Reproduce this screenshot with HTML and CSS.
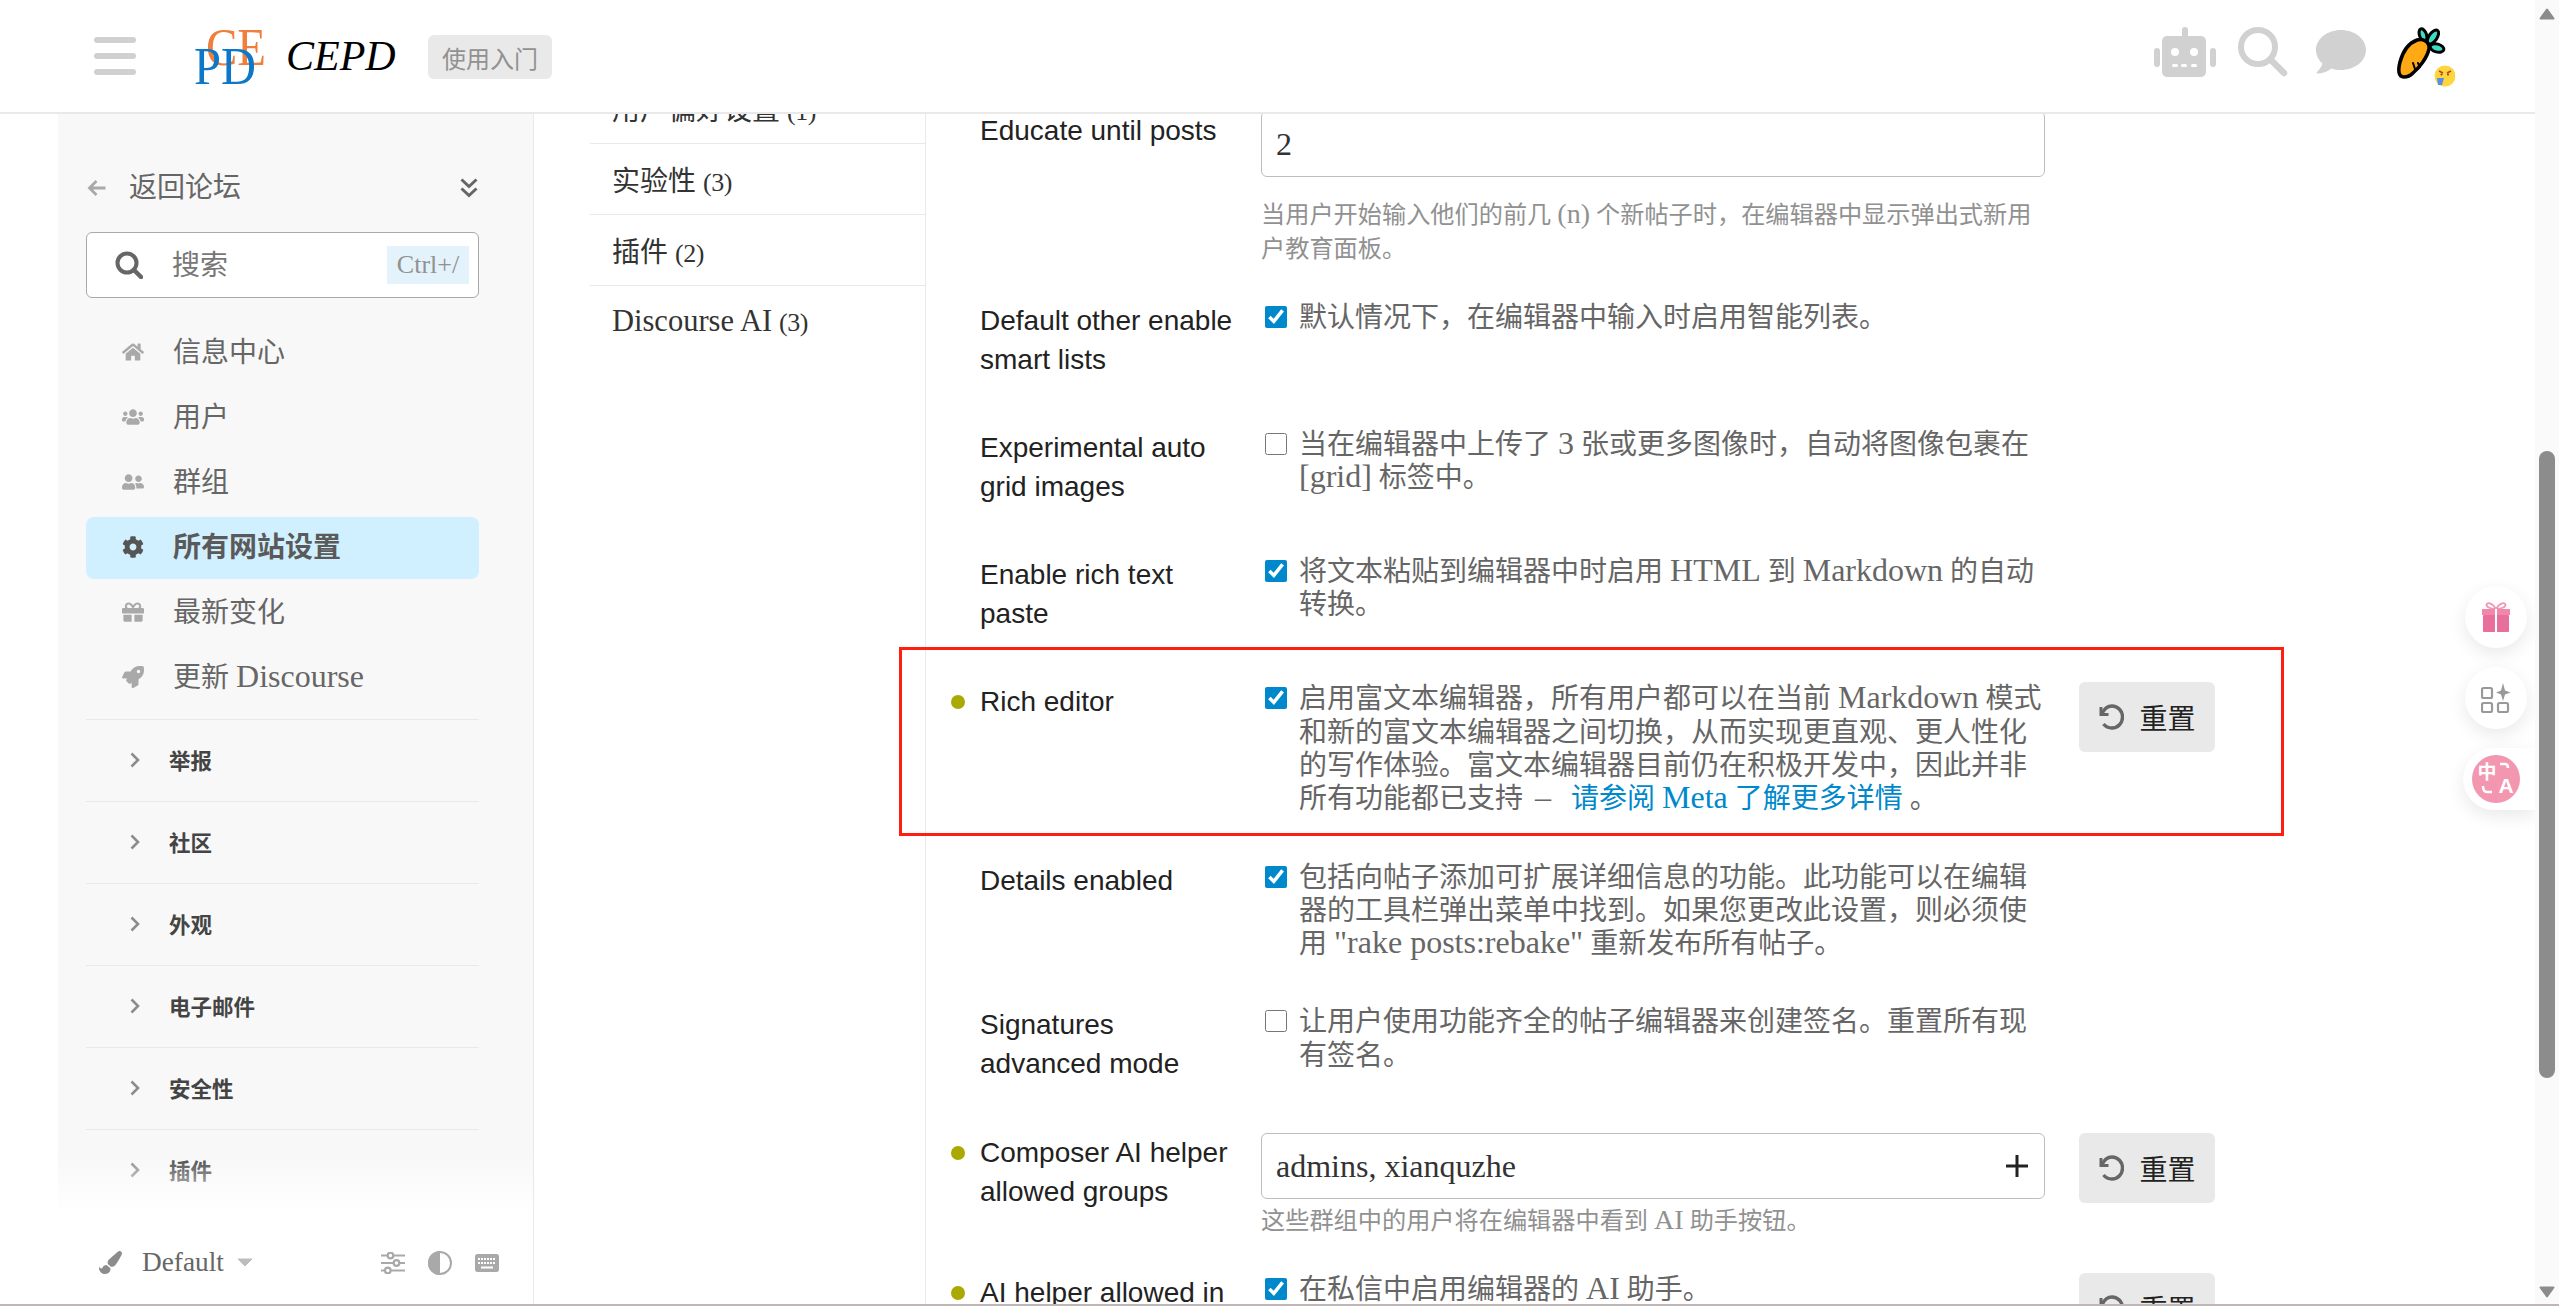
FILE: index.html
```html
<!DOCTYPE html>
<html lang="zh-CN">
<head>
<meta charset="utf-8">
<title>CEPD</title>
<link rel="stylesheet" href="styles.css">
</head>
<body>
<div class="window">
  <div class="app">
    <header class="header">
      <div class="burger"><span></span><span></span><span></span></div>
      <svg class="logo" viewBox="0 0 76 60" width="76" height="60">
        <text x="13" y="38" class="logo-ce" textLength="60" lengthAdjust="spacingAndGlyphs">CE</text>
        <text x="1" y="57" class="logo-pd" textLength="62" lengthAdjust="spacingAndGlyphs">PD</text>
      </svg>
      <span class="brand">CEPD</span>
      <span class="badge">使用入门</span>
      <div class="header-icons">
        <svg class="ic-robot" viewBox="0 0 62 50" width="62" height="50">
          <rect x="28" y="0" width="6" height="12" rx="3" fill="#d1d1d1"/>
          <rect x="8" y="9" width="44" height="41" rx="5" fill="#d1d1d1"/>
          <rect x="0" y="21" width="6" height="19" rx="3" fill="#d1d1d1"/>
          <rect x="56" y="21" width="6" height="19" rx="3" fill="#d1d1d1"/>
          <circle cx="21" cy="25" r="4" fill="#fff"/><circle cx="40" cy="25" r="4" fill="#fff"/>
          <rect x="18" y="37" width="6" height="3" rx="1.5" fill="#fff"/><rect x="27" y="37" width="6" height="3" rx="1.5" fill="#fff"/><rect x="37" y="37" width="6" height="3" rx="1.5" fill="#fff"/>
        </svg>
        <svg class="ic-search" viewBox="0 0 50 50" width="50" height="50">
          <circle cx="20" cy="20" r="17" fill="none" stroke="#d1d1d1" stroke-width="6"/>
          <path d="M33 33L46 46" stroke="#d1d1d1" stroke-width="6.5" stroke-linecap="round"/>
        </svg>
        <svg class="ic-bubble" viewBox="0 0 50 44" width="50" height="44">
          <path d="M25 0C38.800 0 50 8.800 50 20S38.800 40 25 40C21.500 40 18.500 39.500 15.500 38.500C11 42 6 43.500 1.500 43.500C0.500 43.500 0.300 42.700 1 42C3.500 39.500 5.500 36.500 6.500 33.500C2.500 30 0 25.200 0 20C0 8.800 11.200 0 25 0Z" fill="#d1d1d1"/>
        </svg>
        <svg class="ic-avatar" viewBox="0 0 60 62" width="60" height="62">
          <ellipse cx="28" cy="9" rx="3.500" ry="6.500" transform="rotate(-20 28 9)" fill="#3fdcc4" stroke="#000" stroke-width="3"/>
          <ellipse cx="38" cy="11" rx="4" ry="8" transform="rotate(35 38 11)" fill="#3fdcc4" stroke="#000" stroke-width="3"/>
          <ellipse cx="42" cy="22" rx="7" ry="4" transform="rotate(15 42 22)" fill="#3fdcc4" stroke="#000" stroke-width="3"/>
          <path d="M9 51C3 51 3 44 5 36C8 25 14 17 22 14C28 12 35 16 34 23C32 32 24 42 18 47C15 50 12 51 9 51Z" fill="#ffa914" stroke="#000" stroke-width="3.500"/>
          <path d="M18 37L20 43M23 37L25 41" stroke="#000" stroke-width="2" stroke-linecap="round"/>
          <circle cx="50" cy="50" r="10.500" fill="#fcd53f"/>
          <path d="M44 45L48 47M56 45L52 47" stroke="#b5451b" stroke-width="1.500"/>
          <circle cx="46.500" cy="48.500" r="1" fill="#8a3a12"/><circle cx="53" cy="48.500" r="1" fill="#8a3a12"/>
          <path d="M42 52H49L47 59H43Z" fill="#5b8be8"/>
        </svg>
      </div>
    </header>
    <div class="content">
      <aside class="sidebar">
        <div class="side-scroll">
          <div class="side-head">
            <svg class="back-arrow" viewBox="0 0 20 18" width="20" height="18"><path d="M18.500 9H3M9.500 2L2.500 9L9.500 16" fill="none" stroke="#a9a9a9" stroke-width="2.800"/></svg>
            <span class="back-text">返回论坛</span>
            <svg class="double-chev" viewBox="0 0 18 20" width="18" height="20"><path d="M1.500 1.500L9 8.500L16.500 1.500M1.500 10.500L9 17.500L16.500 10.500" fill="none" stroke="#666" stroke-width="3"/></svg>
          </div>
          <div class="side-search">
            <svg viewBox="0 0 28 28" width="28" height="28"><circle cx="12" cy="12" r="9.500" fill="none" stroke="#666" stroke-width="4"/><path d="M19 19L26 26" stroke="#666" stroke-width="4.500" stroke-linecap="round"/></svg>
            <span class="search-word">搜索</span>
            <span class="kbd">Ctrl+/</span>
          </div>
          <nav class="nav">
            <a class="nav-item"><svg class="nav-ic" viewBox="0 0 576 512"><path d="M280.37 148.26L96 300.110V464a16 16 0 0 0 16 16l112.060-.290a16 16 0 0 0 15.920-16V368a16 16 0 0 1 16-16h64a16 16 0 0 1 16 16v95.640a16 16 0 0 0 16 16.050L464 480a16 16 0 0 0 16-16V300L295.670 148.260a12.190 12.190 0 0 0-15.300 0zM571.600 251.470L488 182.560V44.050a12 12 0 0 0-12-12h-56a12 12 0 0 0-12 12v72.610L318.470 43a48 48 0 0 0-61 0L4.340 251.470a12 12 0 0 0-1.600 16.900l25.500 31A12 12 0 0 0 45.150 301l235.220-193.740a12.190 12.190 0 0 1 15.300 0L530.900 301a12 12 0 0 0 16.900-1.600l25.500-31a12 12 0 0 0-1.700-16.930z"/></svg>信息中心</a>
            <a class="nav-item"><svg class="nav-ic" viewBox="0 0 640 512"><path d="M96 224c35.300 0 64-28.700 64-64s-28.700-64-64-64-64 28.700-64 64 28.700 64 64 64zm448 0c35.300 0 64-28.700 64-64s-28.700-64-64-64-64 28.700-64 64 28.700 64 64 64zm32 32h-64c-17.600 0-33.500 7.100-45.100 18.600 40.300 22.100 68.900 62 75.100 109.400h66c17.700 0 32-14.300 32-32v-32c0-35.300-28.700-64-64-64zm-256 0c61.900 0 112-50.100 112-112S381.900 32 320 32 208 82.100 208 144s50.100 112 112 112zm76.800 32h-8.300c-20.800 10-43.900 16-68.500 16s-47.600-6-68.500-16h-8.300C179.600 288 128 339.600 128 403.200V432c0 26.500 21.500 48 48 48h288c26.500 0 48-21.500 48-48v-28.800c0-63.600-51.600-115.200-115.200-115.200zm-223.700-13.400C161.500 263.100 145.600 256 128 256H64c-35.300 0-64 28.700-64 64v32c0 17.700 14.300 32 32 32h65.900c6.300-47.400 34.900-87.300 75.200-109.400z"/></svg>用户</a>
            <a class="nav-item"><svg class="nav-ic" viewBox="0 0 640 512"><path d="M192 256c61.900 0 112-50.100 112-112S253.900 32 192 32 80 82.100 80 144s50.100 112 112 112zm76.800 32h-8.300c-20.800 10-43.900 16-68.500 16s-47.600-6-68.500-16h-8.300C51.600 288 0 339.600 0 403.200V432c0 26.500 21.500 48 48 48h288c26.500 0 48-21.500 48-48v-28.800c0-63.600-51.600-115.200-115.200-115.200zM480 256c53 0 96-43 96-96s-43-96-96-96-96 43-96 96 43 96 96 96zm48 32h-3.800c-13.900 4.800-28.600 8-44.200 8s-30.300-3.200-44.200-8H432c-20.400 0-39.200 5.900-55.700 15.400 24.400 26.300 39.700 61.200 39.700 99.800v38.400c0 2.200-.5 4.300-.6 6.400H592c26.500 0 48-21.500 48-48 0-61.900-50.100-112-112-112z"/></svg>群组</a>
            <a class="nav-item active"><svg class="nav-ic" viewBox="0 0 512 512"><path d="M487.400 315.700l-42.600-24.600c4.300-23.200 4.300-47 0-70.200l42.600-24.600c4.900-2.800 7.100-8.600 5.500-14-11.100-35.600-30-67.800-54.700-94.600-3.800-4.100-10-5.100-14.800-2.300L380.800 110c-17.900-15.400-38.500-27.300-60.800-35.100V25.800c0-5.600-3.900-10.500-9.400-11.700-36.700-8.200-74.300-7.800-109.200 0-5.500 1.200-9.400 6.100-9.400 11.700V75c-22.200 7.900-42.800 19.800-60.800 35.100L88.700 85.500c-4.900-2.800-11-1.900-14.800 2.300-24.700 26.700-43.600 58.900-54.700 94.600-1.700 5.400.6 11.200 5.500 14L67.300 221c-4.300 23.200-4.300 47 0 70.200l-42.600 24.600c-4.900 2.800-7.100 8.600-5.500 14 11.100 35.600 30 67.800 54.700 94.600 3.800 4.100 10 5.100 14.800 2.300l42.600-24.600c17.900 15.400 38.500 27.300 60.800 35.100v49.200c0 5.600 3.900 10.500 9.400 11.700 36.700 8.200 74.300 7.800 109.200 0 5.500-1.200 9.400-6.100 9.400-11.700v-49.200c22.200-7.900 42.800-19.800 60.800-35.100l42.600 24.600c4.900 2.800 11 1.900 14.800-2.300 24.700-26.700 43.600-58.900 54.700-94.600 1.500-5.500-.7-11.300-5.600-14.100zM256 336c-44.100 0-80-35.900-80-80s35.900-80 80-80 80 35.900 80 80-35.900 80-80 80z"/></svg>所有网站设置</a>
            <a class="nav-item"><svg class="nav-ic" viewBox="0 0 512 512"><path d="M32 448c0 17.700 14.300 32 32 32h160V320H32v128zm256 32h160c17.700 0 32-14.300 32-32V320H288v160zm192-320h-42.100c6.200-12.100 10.100-25.500 10.100-40 0-48.500-39.500-88-88-88-41.600 0-68.500 21.300-103 68.300-34.500-47-61.400-68.300-103-68.300-48.500 0-88 39.500-88 88 0 14.500 3.800 27.900 10.100 40H32c-17.700 0-32 14.300-32 32v80c0 8.800 7.200 16 16 16h480c8.800 0 16-7.200 16-16v-80c0-17.700-14.300-32-32-32zm-326.100 0c-22.100 0-40-17.900-40-40s17.900-40 40-40c19.900 0 34.600 3.300 86.100 80h-86.100zm206.100 0h-86.100c51.400-76.500 65.700-80 86.100-80 22.100 0 40 17.900 40 40s-17.900 40-40 40z"/></svg>最新变化</a>
            <a class="nav-item"><svg class="nav-ic" viewBox="0 0 512 512"><path d="M505.120 19.094c-1.189-5.531-6.658-11-12.207-12.188C460.716 0 435.507 0 410.407 0 307.175 0 245.269 55.203 199.052 128H94.838c-16.348.016-35.557 11.875-42.887 26.484L2.516 253.297A28.400 28.400 0 0 0 0 264a24.009 24.009 0 0 0 24.006 24h103.810l-22.475 22.469c-11.365 11.361-12.996 32.258 0 45.250l50.904 50.906c11.156 11.188 32.156 13.156 45.277 0l22.475-22.469V488a24.009 24.009 0 0 0 24.006 24 28.559 28.559 0 0 0 10.707-2.516l98.728-49.391c14.629-7.297 26.508-26.500 26.508-42.859V312.797c72.598-46.313 128.035-108.406 128.035-211.094.001-25.203.001-50.406-6.954-82.609zM384.040 168A40 40 0 1 1 424.050 128 40.023 40.023 0 0 1 384.040 168z"/></svg><span>更新 <span class="lat">Discourse</span></span></a>
          </nav>
          <div class="sections">
            <a class="section"><svg class="chev" viewBox="0 0 10 16" width="10" height="16"><path d="M1.500 1.500L8 8L1.500 14.500" fill="none" stroke="#8c8c8c" stroke-width="2.600"/></svg>举报</a>
            <a class="section"><svg class="chev" viewBox="0 0 10 16" width="10" height="16"><path d="M1.500 1.500L8 8L1.500 14.500" fill="none" stroke="#8c8c8c" stroke-width="2.600"/></svg>社区</a>
            <a class="section"><svg class="chev" viewBox="0 0 10 16" width="10" height="16"><path d="M1.500 1.500L8 8L1.500 14.500" fill="none" stroke="#8c8c8c" stroke-width="2.600"/></svg>外观</a>
            <a class="section"><svg class="chev" viewBox="0 0 10 16" width="10" height="16"><path d="M1.500 1.500L8 8L1.500 14.500" fill="none" stroke="#8c8c8c" stroke-width="2.600"/></svg>电子邮件</a>
            <a class="section"><svg class="chev" viewBox="0 0 10 16" width="10" height="16"><path d="M1.500 1.500L8 8L1.500 14.500" fill="none" stroke="#8c8c8c" stroke-width="2.600"/></svg>安全性</a>
            <a class="section"><svg class="chev" viewBox="0 0 10 16" width="10" height="16"><path d="M1.500 1.500L8 8L1.500 14.500" fill="none" stroke="#8c8c8c" stroke-width="2.600"/></svg>插件</a>
          </div>
          <div class="side-fade"></div>
        </div>
        <div class="side-footer">
          <svg class="brush" viewBox="0 0 512 512" width="23" height="23"><path d="M167.020 309.340c-40.120 2.580-76.530 17.860-97.190 72.300-2.350 6.210-8 9.980-14.590 9.980-11.110 0-45.460-27.670-55.250-34.350C0 439.620 37.930 512 128 512c75.860 0 128-43.770 128-120.190 0-3.110-.650-6.080-.970-9.130l-88.010-73.340zM457.890 0c-15.160 0-29.370 6.710-40.210 16.450C213.270 199.050 192 203.340 192 257.090c0 13.700 3.250 26.760 8.730 38.700l63.820 53.180c7.210 1.800 14.640 3.030 22.390 3.030 62.110 0 98.110-45.470 211.160-256.460 7.380-14.350 13.900-29.850 13.900-45.990C512 20.640 486 0 457.890 0z"/></svg>
          <span class="theme-name">Default</span>
          <svg class="caret" viewBox="0 0 16 9" width="16" height="9"><path d="M1 1H15L8 8Z" fill="#bdbdbd" stroke="#bdbdbd" stroke-linejoin="round"/></svg>
          <div class="foot-icons">
            <svg viewBox="0 0 24 22" width="24" height="22"><g fill="none" stroke="#a9a9a9" stroke-width="2.200"><path d="M0 3.500H6.500M13 3.500H24M0 11H12M18.500 11H24M0 18.500H3.500M10 18.500H24"/><circle cx="9.500" cy="3.500" r="2.800"/><circle cx="15.500" cy="11" r="2.800"/><circle cx="6.800" cy="18.500" r="2.800"/></g></svg>
            <svg viewBox="0 0 24 24" width="24" height="24"><circle cx="12" cy="12" r="11" fill="#fff" stroke="#a9a9a9" stroke-width="2"/><path d="M12 0A12 12 0 0 0 12 24Z" fill="#a9a9a9"/></svg>
            <svg viewBox="0 0 24 18" width="24" height="18"><rect width="24" height="18" rx="2.500" fill="#a9a9a9"/><path d="M3 5H21M3 9H21" stroke="#fff" stroke-width="2" stroke-dasharray="2 1"/><path d="M6 13.500H18" stroke="#fff" stroke-width="2"/></svg>
          </div>
        </div>
      </aside>
      <div class="cats">
        <div class="cat-list">
          <a class="cat"><span>用户偏好设置 <span class="count">(1)</span></span></a>
          <a class="cat"><span>实验性 <span class="count">(3)</span></span></a>
          <a class="cat"><span>插件 <span class="count">(2)</span></span></a>
          <a class="cat cat-last"><span><span class="lat-cat">Discourse AI</span> <span class="count">(3)</span></span></a>
        </div>
      </div>
      <main class="settings">
        <div class="settings-inner">
          <section class="row row-input">
            <div class="label">Educate until posts</div>
            <div class="value">
              <div class="field"><span class="lat">2</span></div>
              <p class="hint hint-gap">当用户开始输入他们的前几 <span class="lat-s">(n)</span> 个新帖子时，在编辑器中显示弹出式新用户教育面板。</p>
            </div>
          </section>
          <section class="row">
            <div class="label">Default other enable smart lists</div>
            <label class="value check"><input type="checkbox" checked><span>默认情况下，在编辑器中输入时启用智能列表。</span></label>
          </section>
          <section class="row">
            <div class="label">Experimental auto grid images</div>
            <label class="value check"><input type="checkbox"><span>当在编辑器中上传了 <span class="lat">3</span> 张或更多图像时，自动将图像包裹在 <span class="lat">[grid]</span> 标签中。</span></label>
          </section>
          <section class="row">
            <div class="label">Enable rich text paste</div>
            <label class="value check"><input type="checkbox" checked><span>将文本粘贴到编辑器中时启用 <span class="lat">HTML</span> 到 <span class="lat">Markdown</span> 的自动转换。</span></label>
          </section>
          <section class="row marked">
            <i class="dot"></i>
            <div class="label">Rich editor</div>
            <label class="value check"><input type="checkbox" checked><span>启用富文本编辑器，所有用户都可以在当前 <span class="lat">Markdown</span> 模式和新的富文本编辑器之间切换，从而实现更直观、更人性化的写作体验。富文本编辑器目前仍在积极开发中，因此并非所有功能都已支持 <span class="lat dash">–</span> <a class="link">请参阅 <span class="lat">Meta</span> 了解更多详情</a> 。</span></label>
            <button class="reset"><svg viewBox="0 0 26 26" width="26" height="26"><path d="M3 3V10.500H10.500" fill="none" stroke="#666" stroke-width="3"/><path d="M4 10C6 5 9.500 2 14 2C20 2 24.500 7 24.500 13S20 24 14 24C10.500 24 7.500 22.500 5.500 20" fill="none" stroke="#666" stroke-width="3.400"/></svg>重置</button>
          </section>
          <section class="row">
            <div class="label">Details enabled</div>
            <label class="value check"><input type="checkbox" checked><span>包括向帖子添加可扩展详细信息的功能。此功能可以在编辑器的工具栏弹出菜单中找到。如果您更改此设置，则必须使用 <span class="lat">"rake posts:rebake"</span> 重新发布所有帖子。</span></label>
          </section>
          <section class="row">
            <div class="label">Signatures<br>advanced mode</div>
            <label class="value check"><input type="checkbox"><span>让用户使用功能齐全的帖子编辑器来创建签名。重置所有现有签名。</span></label>
          </section>
          <section class="row row-input">
            <i class="dot"></i>
            <div class="label">Composer AI helper allowed groups</div>
            <div class="value">
              <div class="field"><span class="lat">admins, xianquzhe</span><svg viewBox="0 0 22 22" width="22" height="22"><path d="M11 0V22M0 11H22" stroke="#222" stroke-width="3"/></svg></div>
              <p class="hint">这些群组中的用户将在编辑器中看到 <span class="lat-s">AI</span> 助手按钮。</p>
            </div>
            <button class="reset"><svg viewBox="0 0 26 26" width="26" height="26"><path d="M3 3V10.500H10.500" fill="none" stroke="#666" stroke-width="3"/><path d="M4 10C6 5 9.500 2 14 2C20 2 24.500 7 24.500 13S20 24 14 24C10.500 24 7.500 22.500 5.500 20" fill="none" stroke="#666" stroke-width="3.400"/></svg>重置</button>
          </section>
          <section class="row">
            <i class="dot"></i>
            <div class="label">AI helper allowed in personal messages</div>
            <label class="value check"><input type="checkbox" checked><span>在私信中启用编辑器的 <span class="lat">AI</span> 助手。</span></label>
            <button class="reset"><svg viewBox="0 0 26 26" width="26" height="26"><path d="M3 3V10.500H10.500" fill="none" stroke="#666" stroke-width="3"/><path d="M4 10C6 5 9.500 2 14 2C20 2 24.500 7 24.500 13S20 24 14 24C10.500 24 7.500 22.500 5.500 20" fill="none" stroke="#666" stroke-width="3.400"/></svg>重置</button>
          </section>
        </div>
      </main>
      <div class="floats">
        <div class="float">
          <svg viewBox="0 0 30 32" width="30" height="32"><path d="M15 8C12 3 8 1 6 3C4 5 8 8 15 8C22 8 26 5 24 3C22 1 18 3 15 8Z" fill="none" stroke="#f197b3" stroke-width="1.800"/><rect x="1" y="8" width="28" height="6" fill="#ef88a9"/><rect x="2" y="14" width="26" height="17" rx="1" fill="#e86f9c"/><path d="M15 8V31" stroke="#fff" stroke-width="2"/></svg>
        </div>
        <div class="float">
          <svg viewBox="0 0 30 30" width="30" height="30"><g fill="none" stroke="#999" stroke-width="2.200"><rect x="1" y="5" width="10" height="10" rx="1.500"/><rect x="1" y="20" width="10" height="9" rx="1.500"/><rect x="17" y="20" width="10" height="9" rx="1.500"/></g><path d="M22 0L24 7.500L29.500 9.500L24 11.500L22 18L20 11.500L15 9.500L20 7.500Z" fill="#999"/></svg>
        </div>
        <div class="float float-pill">
          <svg viewBox="0 0 48 48" width="48" height="48"><circle cx="24" cy="24" r="24" fill="#f397b0"/><text x="15" y="24" class="tr-zh">中</text><text x="34" y="38" class="tr-en">A</text><path d="M28 9H33C35 9 36 10 36 13M11 31C11 35 12 37 15 37H20" fill="none" stroke="#fff" stroke-width="2.600"/></svg>
        </div>
      </div>
    </div>
  </div>
  <div class="scrollbar">
    <svg class="sb-up" viewBox="0 0 16 12" width="16" height="12"><path d="M8 1.500L14.500 10.500H1.500Z" fill="#8c8c8c" stroke="#8c8c8c" stroke-width="2" stroke-linejoin="round"/></svg>
    <div class="sb-thumb"></div>
    <svg class="sb-down" viewBox="0 0 16 12" width="16" height="12"><path d="M8 10.500L14.500 1.500H1.500Z" fill="#8c8c8c" stroke="#8c8c8c" stroke-width="2" stroke-linejoin="round"/></svg>
  </div>
</div>
<div class="edge"></div>
</body>
</html>
```
FILE: styles.css
```css
*, *::after { box-sizing: border-box; }
html, body { margin: 0; height: 1306px; overflow: hidden; background: #fff; }
body {
  font-family: "Liberation Serif", "Noto Sans CJK SC", serif;
  font-size: 28px;
  color: #222;
  display: flex;
  flex-direction: column;
}
.lat { font-size: 32px; line-height: 0; }
.lat-s { font-size: 28px; line-height: 0; }
.lat-cat { font-size: 30.500px; line-height: 0; }
.count { font-size: 26px; line-height: 0; letter-spacing: -.5px; }
.dash { margin: 0 13px 0 5px; }
.window { flex: 1; display: flex; min-height: 0; }
.edge { height: 2px; background: #bdb6b4; flex: none; }
.app { flex: 1; min-width: 0; display: flex; flex-direction: column; position: relative; }

/* header */
.header {
  height: 114px;
  flex: none;
  display: flex;
  align-items: center;
  border-bottom: 2px solid #e9e9e9;
  padding-left: 94px;
}
.burger { width: 42px; display: flex; flex-direction: column; gap: 9.5px; }
.burger span { height: 6.500px; border-radius: 3px; background: #d1d1d1; }
.logo { margin-left: 57px; margin-top: 2px; overflow: visible; flex: none; }
.logo text { font-family: "Liberation Serif", serif; font-size: 52px; }
.logo-ce { fill: #ee7f3c; }
.logo-pd { fill: #0e78c8; }
.brand { margin-left: 17px; width: 142px; font-style: italic; font-size: 42px; color: #000; }
.badge {
  width: 124px; height: 44px; background: #e9e9e9; border-radius: 6px;
  display: flex; align-items: center; justify-content: center;
  font-size: 24px; color: #919191; margin-top: 2px;
}
.header-icons { margin-left: auto; display: flex; align-items: flex-start; padding-right: 80px; height: 64px; padding-top: 2px; }
.ic-robot { margin-top: 1px; }
.ic-search { margin-left: 22px; margin-top: 1px; }
.ic-bubble { margin-left: 28px; margin-top: 4px; }
.ic-avatar { margin-left: 29px; }

/* layout */
.content { flex: 1; min-height: 0; display: flex; position: relative; overflow: hidden; }

/* sidebar */
.sidebar {
  width: 476px; margin-left: 58px; flex: none; display: flex; flex-direction: column;
  background: #f8f8f8; border-right: 1.500px solid #e9e9e9;
}
.side-scroll { flex: 1; min-height: 0; overflow: hidden; position: relative; padding: 0 54px 0 28px; }
.side-fade { position: absolute; left: 0; right: 0; bottom: 0; height: 58px; background: linear-gradient(to bottom, rgba(255,255,255,0), #fff); }
.side-head { height: 50px; margin-top: 49px; display: flex; align-items: center; color: #666; }
.back-arrow { margin-left: 1px; }
.back-text { margin-left: 22px; flex: 1; padding-bottom: 7px; }
.double-chev { margin-right: 1px; }
.side-search {
  height: 66px; margin-top: 19px; background: #fff; border: 1.500px solid #a9a9a9; border-radius: 6px;
  display: flex; align-items: center; padding-left: 28px; padding-right: 9px; color: #777;
}
.search-word { margin-left: 29px; flex: 1; padding-bottom: 5px; }
.kbd { width: 82px; height: 38px; background: #e3f2fb; display: flex; align-items: center; justify-content: center; font-size: 26px; color: #919191; }
.nav { margin-top: 24px; padding-bottom: 10px; display: flex; flex-direction: column; gap: 3px; border-bottom: 1.500px solid #e9e9e9; }
.nav-item { height: 62px; border-radius: 8px; display: flex; align-items: center; padding: 0 0 7px 36px; color: #666; }
.nav-ic { width: 22px; height: 22px; fill: #a9a9a9; margin-right: 29px; margin-top: 4px; flex: none; }
.nav-item.active { background: #d1f0ff; font-weight: 700; color: #5a5a5a; }
.nav-item.active .nav-ic { fill: #555; }
.section {
  height: 82px; display: flex; align-items: center; padding: 0 0 2px 44px;
  border-bottom: 1.500px solid #e9e9e9; font-size: 21.500px; font-weight: 700; color: #444;
}
.chev { margin-right: 29px; }
.side-footer { height: 91px; flex: none; background: #fff; display: flex; align-items: center; padding: 8px 34px 0 41px; color: #666; }
.brush { fill: #8c8c8c; }
.theme-name { margin-left: 20px; font-size: 27.300px; }
.caret { margin-left: 13px; }
.foot-icons { margin-left: auto; display: flex; align-items: center; gap: 23px; }

/* categories */
.cats { width: 392px; flex: none; padding-left: 56px; border-right: 1.500px solid #e9e9e9; overflow: hidden; }
.cat-list { margin-top: -41px; }
.cat { height: 71px; display: flex; align-items: center; padding-left: 22px; border-bottom: 1.500px solid #e9e9e9; color: #333; }
.cat-last { border-bottom: 0; }

/* settings */
.settings { flex: 1; min-width: 0; }
.settings-inner { margin-top: -3.500px; padding-left: 25px; width: 1289px; }
.row {
  position: relative;
  display: grid;
  grid-template-columns: 14px 296px 784px 170px;
  padding-bottom: 45px;
  align-items: start;
}
.row-input { padding-bottom: 35px; }
.dot { grid-column: 1; grid-row: 1; width: 14px; height: 14px; border-radius: 50%; background: #a9a900; margin-top: 13px; }
.label {
  grid-column: 2; grid-row: 1; margin-left: 15px; width: 265px; padding-bottom: 4.300px;
  font-family: "Liberation Sans", "Noto Sans CJK SC", sans-serif; line-height: 39px; color: #222;
}
.value { grid-column: 3; grid-row: 1; width: 784px; display: block; }
.check { display: flex; color: #666; line-height: 33.300px; }
.check input { width: 22px; height: 22px; margin: 5px 12px 0 4px; flex: none; accent-color: #0088cc; }
.field {
  height: 66px; border: 1.500px solid #bdbdbd; border-radius: 6px; background: #fff;
  display: flex; align-items: center; justify-content: space-between; padding: 0 16px 0 14px; color: #333;
}
.hint { margin: 5px 0 0; font-size: 24.200px; line-height: 34px; color: #919191; }
.hint-gap { margin-top: 21px; }
.link { color: #0088cc; }
.reset {
  grid-column: 4; grid-row: 1; margin-left: 34px; width: 136px; height: 70px; border: 0; border-radius: 6px; background: #e9e9e9;
  font: inherit; color: #222; display: flex; align-items: center; justify-content: center; gap: 15px; padding: 0;
}
.marked::after {
  content: ""; position: absolute; left: -52px; top: -35.500px; width: 1385px; height: 189px;
  border: 3.500px solid #ff1f10; pointer-events: none;
}

/* floats */
.floats { position: absolute; right: 0; top: 472px; display: flex; flex-direction: column; gap: 19px; align-items: flex-end; }
.float {
  width: 62px; height: 62px; margin-right: 8px; border-radius: 50%; background: #fff;
  box-shadow: 0 6px 18px rgba(0,0,0,.09); display: flex; align-items: center; justify-content: center;
}
.float-pill { width: 72px; margin-right: 0; border-radius: 31px 0 0 31px; justify-content: flex-start; padding-left: 9px; }
.tr-zh { font: 700 19px "Noto Sans CJK SC", sans-serif; fill: #fff; text-anchor: middle; }
.tr-en { font: 700 21px "Liberation Sans", sans-serif; fill: #fff; text-anchor: middle; }

/* scrollbar */
.scrollbar { width: 24px; flex: none; background: #fafafa; display: flex; flex-direction: column; align-items: center; }
.sb-up { margin-top: 8px; flex: none; }
.sb-thumb { width: 16px; height: 627px; margin-top: 431px; background: #8c8c8c; border-radius: 8px; flex: none; }
.sb-down { margin-top: auto; margin-bottom: 6px; flex: none; }
```
